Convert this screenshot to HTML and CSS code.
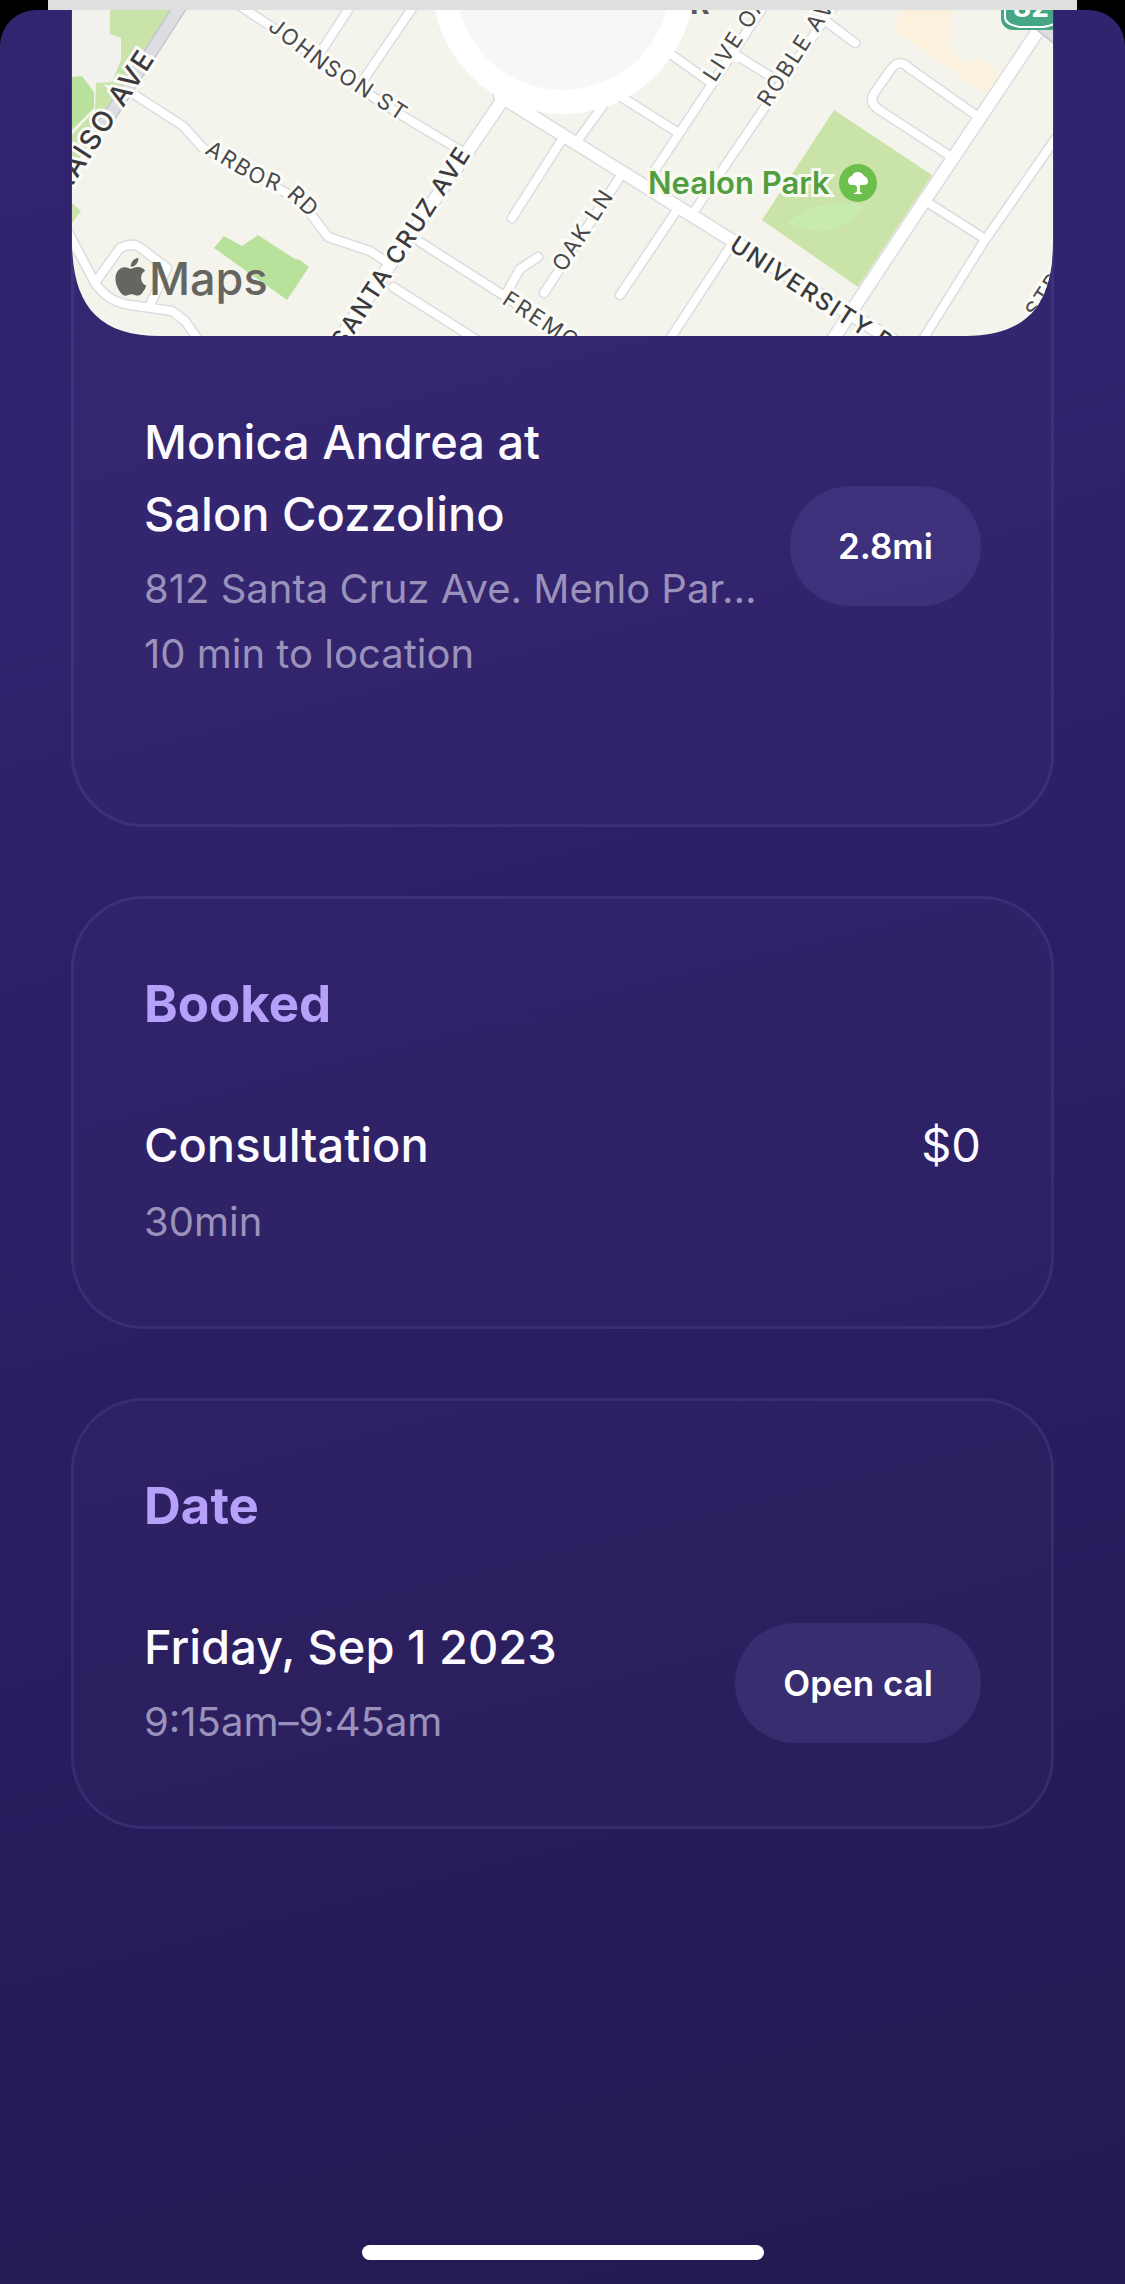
FILE: index.html
```html
<!DOCTYPE html>
<html lang="en">
<head>
<meta charset="utf-8">
<meta name="viewport" content="width=device-width, initial-scale=1">
<title>Appointment</title>
<link rel="stylesheet" href="styles.css">
</head>
<body>
<div class="backdrop"></div>
<main class="sheet">
  <div class="cards">
    <section class="card place">
      <svg class="map" viewBox="72 10 981 326" role="img" aria-label="Map of the salon's location">
        <defs>
          <clipPath id="frame"><path d="M72 10V240C72 305 98 336 160 336H965C1027 336 1053 305 1053 240V10Z"/></clipPath>
          <path id="johnson" d="M267 29L320 70L345 85L440 147"/>
          <path id="arbor" d="M204 153L250 181L284 194L312 220L330 240"/>
        </defs>
        <g clip-path="url(#frame)">
          <rect class="land" x="72" y="10" width="981" height="326"/>
          <path class="plaza" d="M72 10H110V34L121 38V60L112 82L96 83L82 76L72 77Z"/>
          <path class="park" d="M110 10H172L130 82L72 170V135L95 110L96 83L112 82L121 60V38L110 34Z"/>
          <path class="lawn" d="M72 77L82 76L94 92V108L72 130Z"/>
          <path class="park" d="M72 203L81 211L72 223Z"/>
          <path class="lawn" d="M224 236L242 246L258 235L295 259L300 260L309 267L287 300L214 248Z"/>
          <path class="shops" d="M900 10H951L950 50L965 65L980 58L1001 75L985 93L955 73L895 30Z"/>
          <path class="park" d="M834 110L932 175L858 287L762 220Z"/>
          <path class="meadow" d="M788 223Q835 245 865 206Q815 196 788 223Z"/>
          <g class="casing">
            <path d="M240 6L275 29L370 95L403 116L463 152M352 4L320 53M415 4L362 82M135 95L183 126L203 148L290 195L310 213L328 237L370 251L390 264M68 232L95 283Q108 302 130 305L172 311L185 321L200 342M97 280L120 248Q133 241 142 249L167 268L150 305M420 242L503 295L570 340M393 287L480 342M507 292L520 269L538 257M563 138L512 218M602 107L578 140M620 177L544 293M675 213L620 295M835 4L693 213M730 247L668 342M765 4L653 173M672 55L707 80M623 98L677 132M733 53L773 78M827 22L855 43M977 116L909 68Q900 58 891 69L875 92Q868 102 878 109L950 156M1056 138L983 243L920 344M927 202L985 239"/>
            <path class="wide" d="M504 98L325 360M500 96L900 345M1048 16L925 200L826 350"/>
          </g>
          <g class="road">
            <path d="M240 6L275 29L370 95L403 116L463 152M352 4L320 53M415 4L362 82M135 95L183 126L203 148L290 195L310 213L328 237L370 251L390 264M68 232L95 283Q108 302 130 305L172 311L185 321L200 342M97 280L120 248Q133 241 142 249L167 268L150 305M420 242L503 295L570 340M393 287L480 342M507 292L520 269L538 257M563 138L512 218M602 107L578 140M620 177L544 293M675 213L620 295M835 4L693 213M730 247L668 342M765 4L653 173M672 55L707 80M623 98L677 132M733 53L773 78M827 22L855 43M977 116L909 68Q900 58 891 69L875 92Q868 102 878 109L950 156M1056 138L983 243L920 344M927 202L985 239"/>
            <path class="wide" d="M504 98L325 360M500 96L900 345M1048 16L925 200L826 350"/>
          </g>
          <path class="avenue-edge" d="M182 4L118 103L104 124M1042 26L1062 42"/>
          <path class="avenue" d="M182 4L118 103L104 124M1042 26L1062 42"/>
          <circle cx="563" cy="-17" r="131" fill="#fff"/>
          <circle cx="563" cy="-17" r="107" fill="#f7f7f7"/>

          <text class="street"><textPath href="#johnson">JOHNSON ST</textPath></text>
          <text class="street"><textPath href="#arbor">ARBOR RD</textPath></text>
          <text class="street main major" transform="translate(66 196) rotate(-57)">RAISO AVE</text>
          <text class="street main" transform="translate(344 350) rotate(-57)">SANTA CRUZ AVE</text>
          <text class="street" transform="translate(564 273) rotate(-57)">OAK LN</text>
          <text class="street" transform="translate(715 83) rotate(-57)">LIVE OAK AVE</text>
          <text class="street" transform="translate(769 108) rotate(-57)">ROBLE AVE</text>
          <text class="street" transform="translate(501 303) rotate(33)">FREMONT ST</text>
          <text class="street main" transform="translate(728 249) rotate(33)">UNIVERSITY DR</text>
          <text class="street" transform="translate(1037 319) rotate(-57)">STREET</text>
          <text class="poi-gray" x="690" y="14">R</text>

          <rect x="1001" y="-20" width="61" height="50" rx="12" fill="#46a584"/>
          <path d="M1005 4V18Q1006 25 1020 27H1043Q1058 25 1058 18V4" fill="none" stroke="#fff" stroke-width="2"/>
          <text class="shield" x="1031" y="17">82</text>

          <text class="poi" x="648" y="194">Nealon Park</text>
          <circle cx="858" cy="183" r="19" fill="#6cbf4b"/>
          <path fill="#fff" d="M858 172c3 0 5 2 6 4 3 1 4 3 4 6 0 2-2 3-4 3h-4v6c0 1 1 2 2 2v1h-8v-1c2 0 3-1 3-3v-3l-2-2h-3c-3 0-4-2-4-4 0-3 2-5 4-5 1-3 3-4 6-4z"/>

          <g class="brand">
            <path transform="translate(112 258) scale(1.57)" d="M12.152 6.896c-.948 0-2.415-1.078-3.96-1.04-2.04.027-3.91 1.183-4.961 3.014-2.117 3.675-.546 9.103 1.519 12.09 1.013 1.454 2.208 3.09 3.792 3.039 1.52-.065 2.09-.987 3.935-.987 1.831 0 2.35.987 3.96.948 1.637-.026 2.676-1.48 3.676-2.948 1.156-1.688 1.636-3.325 1.662-3.415-.039-.013-3.182-1.221-3.22-4.857-.026-3.04 2.48-4.494 2.597-4.559-1.429-2.09-3.623-2.324-4.39-2.376-2-.156-3.675 1.09-4.61 1.09zM15.53 3.83c.843-1.012 1.4-2.427 1.245-3.83-1.207.052-2.662.805-3.532 1.818-.78.896-1.454 2.338-1.273 3.714 1.338.104 2.715-.688 3.559-1.701"/>
            <text x="149" y="295">Maps</text>
          </g>
        </g>
      </svg>
      <div class="row">
        <div class="details">
          <h1 class="title">Monica Andrea at<br>Salon Cozzolino</h1>
          <p class="note">812 Santa Cruz Ave. Menlo Par…</p>
          <p class="note">10 min to location</p>
        </div>
        <button class="pill" type="button">2.8mi</button>
      </div>
    </section>

    <section class="card">
      <h2 class="heading">Booked</h2>
      <div class="row top">
        <div class="details service">
          <h3 class="title">Consultation</h3>
          <p class="note">30min</p>
        </div>
        <p class="title price">$0</p>
      </div>
    </section>

    <section class="card">
      <h2 class="heading">Date</h2>
      <div class="row">
        <div class="details">
          <h3 class="title">Friday, Sep 1 2023</h3>
          <p class="note">9:15am–9:45am</p>
        </div>
        <button class="pill" type="button">Open cal</button>
      </div>
    </section>
  </div>
  <div class="home-indicator"></div>
</main>
</body>
</html>
```
FILE: styles.css
```css
* {
  box-sizing: border-box;
}

body {
  display: flex;
  flex-direction: column;
  min-height: 100vh;
  margin: 0;
  background: #000;
  color: #fcfaff;
  font-family: Inter, "Liberation Sans", sans-serif;
}

h1, h2, h3, p {
  margin: 0;
}

.backdrop {
  height: 10px;
  margin: 0 48px;
  background: #dfdfdf;
}

.sheet {
  display: flex;
  flex: 1;
  flex-direction: column;
  border-radius: 36px 36px 0 0;
  background: linear-gradient(166deg, #32246f 0%, #30226c 25%, #2a1d61 60%, #251b58 85%, #231951 100%);
}

.cards {
  display: flex;
  flex-direction: column;
  gap: 69px;
  padding: 0 71px;
}

.card {
  display: flex;
  flex-direction: column;
  gap: 73px;
  padding: 72px 70px;
  border: 3px solid rgba(150, 130, 220, 0.13);
  border-radius: 72px;
  background: rgba(255, 255, 255, 0.016);
}

.place {
  gap: 70px;
  padding-top: 0;
  padding-bottom: 138px;
  border-top: 0;
  border-top-left-radius: 0;
  border-top-right-radius: 0;
}

.map {
  display: block;
  width: auto;
  margin: 0 -72px;
}

.row {
  display: flex;
  align-items: center;
  justify-content: space-between;
  gap: 24px;
}

.row.top {
  align-items: flex-start;
}

.details {
  flex: 1;
  min-width: 0;
}

.title {
  margin-bottom: 6px;
  font-size: 47px;
  font-weight: 500;
  line-height: 72px;
}

.service .title {
  margin-bottom: 8px;
}

.price {
  font-weight: 400;
}

.note {
  overflow: hidden;
  color: #9b92bb;
  font-size: 40px;
  line-height: 65px;
  text-overflow: ellipsis;
  white-space: nowrap;
}

.heading {
  color: #b7a0fa;
  font-size: 51px;
  font-weight: 700;
  line-height: 65px;
}

.pill {
  height: 120px;
  padding: 0 48px;
  border: 0;
  border-radius: 60px;
  background: rgba(160, 145, 235, 0.12);
  color: #fff;
  font-family: inherit;
  font-size: 35px;
  font-weight: 600;
}

.home-indicator {
  width: 402px;
  height: 15px;
  margin: auto auto 24px;
  border-radius: 8px;
  background: #fff;
}

/* Map */
.land { fill: #f4f4ec; }
.plaza { fill: #f1f1ee; }
.park { fill: #c9e3a8; }
.lawn { fill: #b8e29b; }
.meadow { fill: #c8ecb0; }
.shops { fill: #fcf1dc; }

.casing,
.road,
.avenue,
.avenue-edge {
  fill: none;
  stroke-linecap: round;
  stroke-linejoin: round;
}

.casing { stroke: #dcdce0; stroke-width: 11px; }
.casing .wide { stroke-width: 15px; }
.road { stroke: #fff; stroke-width: 8px; }
.road .wide { stroke-width: 12px; }
.avenue-edge { stroke: #c4c7cf; stroke-width: 14px; }
.avenue { stroke: #dcdee3; stroke-width: 11px; }

.street {
  fill: #48484a;
  stroke: #fbfbf7;
  stroke-width: 6px;
  paint-order: stroke;
  font-size: 22px;
  letter-spacing: 2px;
}

.street.main {
  fill: #3a3a3c;
  font-size: 24px;
  font-weight: 500;
}

.street.major {
  font-size: 28px;
}

.poi {
  fill: #529e3e;
  stroke: #f8faf2;
  stroke-width: 6px;
  paint-order: stroke;
  font-size: 31px;
  font-weight: 600;
}

.poi-gray {
  fill: #58585a;
  font-size: 30px;
  font-weight: 700;
}

.shield {
  fill: #fff;
  font-size: 28px;
  font-weight: 700;
  text-anchor: middle;
}

.brand {
  fill: #666661;
  font-size: 45px;
  font-weight: 500;
}
```
